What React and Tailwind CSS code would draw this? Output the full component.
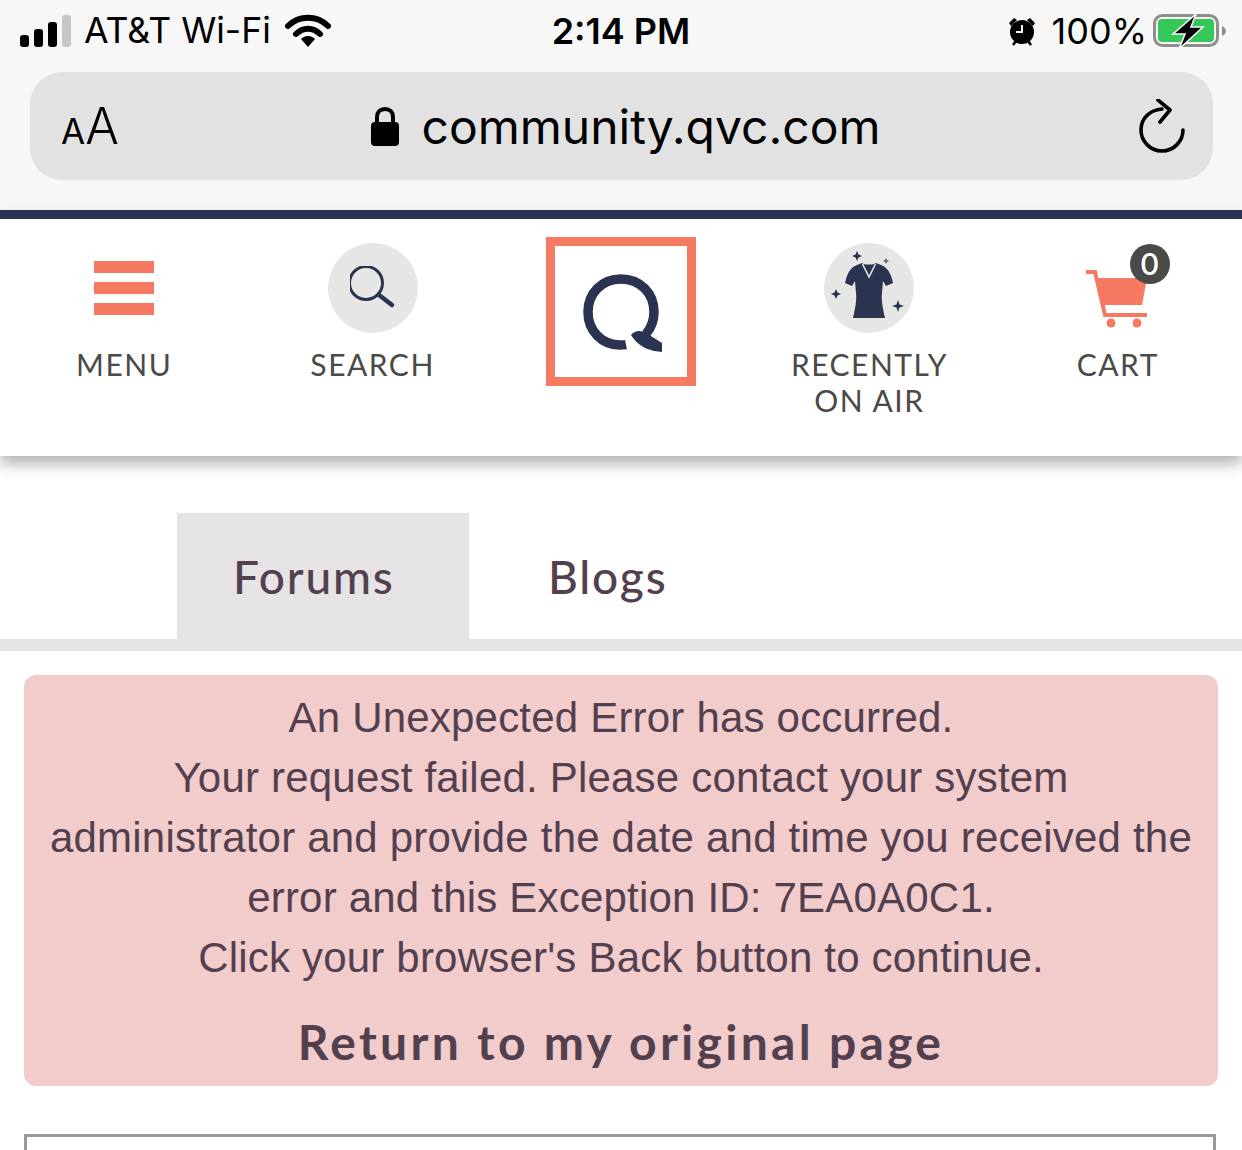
const Signal = () => (
  <svg width="52" height="32" viewBox="0 0 52 32">
    <rect x="0" y="20" width="9" height="12" rx="3" fill="#000" />
    <rect x="14" y="14" width="9" height="18" rx="3" fill="#000" />
    <rect x="28" y="7" width="9" height="25" rx="3" fill="#000" />
    <rect x="42" y="0" width="9" height="32" rx="3" fill="#c6c6c6" />
  </svg>
);

const Wifi = () => (
  <svg width="46" height="34" viewBox="0 0 46 34" fill="none">
    <path d="M3 12C14 1 32 1 43 12" stroke="#000" strokeWidth="6" strokeLinecap="round" />
    <path d="M11 20C18 13 28 13 35 20" stroke="#000" strokeWidth="6" strokeLinecap="round" />
    <path d="M16 25C20 21 26 21 30 25L23 33Z" fill="#000" />
  </svg>
);

const Alarm = () => (
  <svg width="28" height="30" viewBox="0 0 28 30">
    <circle cx="14" cy="16" r="12" fill="#000" />
    <path d="M1 7L6 2L9 4L3 10Z" fill="#000" />
    <path d="M27 7L22 2L19 4L25 10Z" fill="#000" />
    <path d="M5 29L8 25M23 29L20 25" stroke="#000" strokeWidth="2.5" />
    <path d="M14 9V16H8" stroke="#f7f7f7" strokeWidth="2" fill="none" />
  </svg>
);

const Battery = () => (
  <svg width="74" height="36" viewBox="0 0 74 36">
    <rect x="2.500" y="2.500" width="63" height="30" rx="8" fill="none" stroke="#8e8e8e" strokeWidth="3" />
    <rect x="6" y="6" width="56" height="23" rx="4" fill="#35c759" />
    <path d="M70 13C72 14 74 16 74 18C74 20 72 22 70 23Z" fill="#8e8e8e" />
    <path d="M44 1L21 21H33L27 36L51 14H39Z" fill="#000" stroke="#f7f7f7" strokeWidth="1.600" />
  </svg>
);

const Lock = () => (
  <svg width="28" height="40" viewBox="0 0 28 40">
    <path d="M6 18V11C6 6 9 3 14 3C19 3 22 6 22 11V18" stroke="#000" strokeWidth="4" fill="none" />
    <rect x="0" y="16" width="28" height="24" rx="4" fill="#000" />
  </svg>
);

const Reload = () => (
  <svg width="46" height="54" viewBox="0 0 46 54" fill="none">
    <path d="M23 10C11 11 2 19 2 31C2 42 11 52 23 52C35 52 44 42 44 31" stroke="#000" strokeWidth="3.6" strokeLinecap="round" />
    <path d="M19 1L31 11L21 23" stroke="#000" strokeWidth="3.6" strokeLinecap="round" strokeLinejoin="round" />
  </svg>
);

const SearchGlyph = () => (
  <svg width="46" height="44" viewBox="0 0 46 44" fill="none">
    <circle cx="16" cy="17" r="16.500" stroke="#2a3450" strokeWidth="3" />
    <path d="M29 29L42 39" stroke="#2a3450" strokeWidth="4.500" strokeLinecap="round" />
  </svg>
);

const Dress = () => (
  <svg width="90" height="90" viewBox="0 0 90 90">
    <circle cx="45" cy="45" r="45" fill="#e6e6e4" />
    <path d="M38 20L33 22C27 24 23 30 21 40L28 43L31 38L32 50C33 57 31 66 29 75H61C59 66 57 57 58 50L59 38L62 43L69 40C67 30 63 24 57 22L52 20C50 22 40 22 38 20Z" fill="#2a3450" />
    <path d="M38.500 21L45 34L51.500 21" stroke="#e6e6e4" strokeWidth="1.600" fill="none" />
    <path d="M33 8L34.500 11.500L38 13L34.500 14.500L33 18L31.500 14.500L28 13L31.500 11.500Z" fill="#2a3450" />
    <path d="M62 15L63 17L65 18L63 19L62 21L61 19L59 18L61 17Z" fill="#5b6378" />
    <path d="M12 46L13.500 49.500L17 51L13.500 52.500L12 56L10.500 52.500L7 51L10.500 49.500Z" fill="#2a3450" />
    <path d="M74 57L75.500 61.500L80 63L75.500 64.500L74 69L72.500 64.500L68 63L72.500 61.500Z" fill="#2a3450" />
  </svg>
);

const QLogo = () => (
  <svg width="90" height="90" viewBox="-4 -4 90 90" fill="none">
    <path d="M46 73.600C44 74 42 74 40 74C22 74 8 60 8 41C8 22 22 8 41 8C60 8 74 22 74 41C74 50 71 57 66 63" stroke="#2a3450" strokeWidth="9.500" />
    <path d="M51 64C55 59 61 59 66 62L82 72V81C72 80 60 78 51 64Z" fill="#2a3450" />
  </svg>
);

const Cart = () => (
  <svg width="62" height="60" viewBox="0 0 62 60">
    <path d="M1 2H10L20 45H62" stroke="#f67a62" strokeWidth="4" fill="none" />
    <path d="M13 8H62L57 35H19Z" fill="#f67a62" />
    <circle cx="26" cy="53" r="4.500" fill="#f67a62" />
    <circle cx="52" cy="53" r="4.500" fill="#f67a62" />
  </svg>
);

const NavLabel = ({ children }) => (
  <div className="mt-[13px] text-center font-['Lato',sans-serif] text-[30px] leading-[36px] tracking-[1.5px] text-[#4a4a48]">
    {children}
  </div>
);

export default function App() {
  return (
    <div className="h-[1150px] w-[1242px] overflow-hidden bg-white font-['Inter',sans-serif]">
      {/* Browser chrome */}
      <div className="h-[210px] bg-[#f7f7f7] px-[20px]">
        <div className="grid h-[62px] grid-cols-3 items-center text-[36px] text-black">
          <div className="flex items-center">
            <Signal />
            <span className="ml-[12px] mr-[14px] text-[35.6px]">AT&amp;T Wi-Fi</span>
            <Wifi />
          </div>
          <div className="text-center font-semibold">2:14 PM</div>
          <div className="-mr-[4px] flex items-center justify-end">
            <Alarm />
            <span className="ml-[16px] mr-[5px]">100%</span>
            <Battery />
          </div>
        </div>
        <div className="mx-[10px] mt-[10px] flex h-[108px] w-[1183px] items-center justify-between rounded-[32px] bg-[#e2e2e2] pl-[31px] pr-[28px]">
          <div className="flex w-[58px] items-baseline text-black">
            <span className="text-[35px]">A</span>
            <span className="text-[50px] font-light">A</span>
          </div>
          <div className="-ml-[7px] flex items-center gap-[23px]">
            <Lock />
            <span className="pt-[1px] text-[48px] text-black">community.qvc.com</span>
          </div>
          <Reload />
        </div>
      </div>

      {/* Site header */}
      <div className="relative h-[246px] border-t-[9px] border-[#2a3450] bg-white shadow-[0_8px_14px_rgba(0,0,0,0.3)]">
        <div className="grid grid-cols-5">
          <div className="flex flex-col items-center pt-[42px]">
            <div className="flex h-[54px] w-[60px] flex-col justify-between">
              <div className="h-[12px] bg-[#f67a62]" />
              <div className="h-[12px] bg-[#f67a62]" />
              <div className="h-[12px] bg-[#f67a62]" />
            </div>
            <div className="mt-[18px]"><NavLabel>MENU</NavLabel></div>
          </div>
          <div className="flex flex-col items-center pt-[24px]">
            <div className="flex h-[90px] w-[90px] items-center justify-center rounded-full bg-[#e6e6e4]">
              <SearchGlyph />
            </div>
            <NavLabel>SEARCH</NavLabel>
          </div>
          <div className="flex flex-col items-center pt-[18px]">
            <div className="flex h-[149px] w-[150px] items-center justify-center border-[9px] border-[#f67a62] bg-white">
              <QLogo />
            </div>
          </div>
          <div className="flex flex-col items-center pt-[24px]">
            <Dress />
            <NavLabel>RECENTLY<br />ON AIR</NavLabel>
          </div>
          <div className="flex flex-col items-center pt-[24px]">
            <div className="relative h-[90px] w-[90px]">
              <div className="absolute left-[12px] top-[27px]"><Cart /></div>
              <div className="absolute left-[57px] top-[1px] flex h-[40px] w-[40px] items-center justify-center rounded-full bg-[#4a4a48] text-[30px] font-medium leading-none text-white">
                0
              </div>
            </div>
            <NavLabel>CART</NavLabel>
          </div>
        </div>
      </div>

      {/* Tabs */}
      <div className="mt-[57px] flex h-[138px] border-b-[12px] border-[#e5e3e4] pl-[177px] font-['Lato',sans-serif] text-[46px] font-medium tracking-[1.8px] text-[#53404f]">
        <div className="flex h-[126px] w-[292px] items-center bg-[#e5e3e4] pl-[56px]">Forums</div>
        <div className="ml-[79px] flex h-[126px] items-center">Blogs</div>
      </div>

      {/* Error box */}
      <div className="mx-[24px] mt-[24px] h-[411px] w-[1194px] rounded-[12px] bg-[#f2cbcb] pt-[13px] text-center font-['Liberation_Sans',sans-serif] text-[42px] leading-[60px] tracking-[0.2px] text-[#53404f]">
        <p>An Unexpected Error has occurred.</p>
        <p>Your request failed. Please contact your system</p>
        <p>administrator and provide the date and time you received the</p>
        <p>error and this Exception ID: 7EA0A0C1.</p>
        <p>Click your browser's Back button to continue.</p>
        <p className="mt-[24px] font-['Lato',sans-serif] text-[48px] font-bold tracking-[3.3px]">Return to my original page</p>
      </div>

      {/* Next panel, cut off by the bottom edge */}
      <div className="mx-[24px] mt-[48px] h-[40px] w-[1192px] border-[3px] border-[#999999]" />
    </div>
  );
}
